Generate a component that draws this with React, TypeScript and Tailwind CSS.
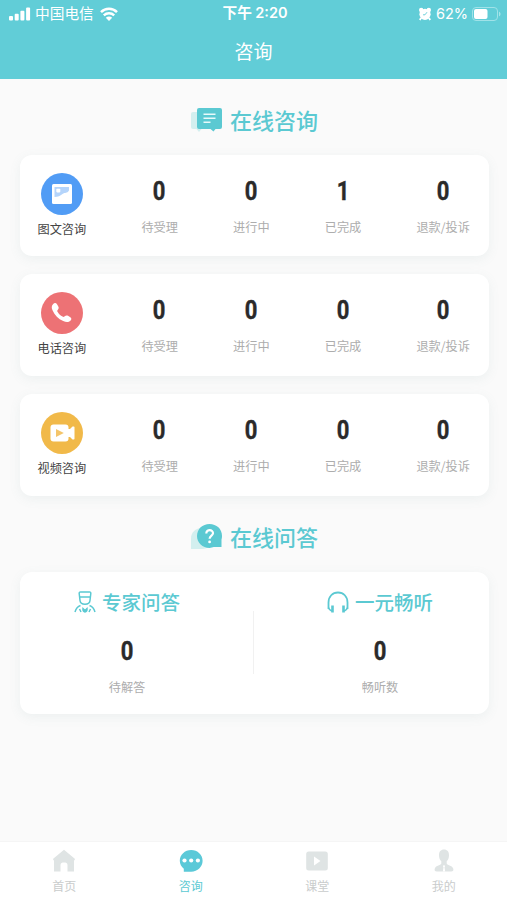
import type { ReactNode } from "react";

type Stat = {
  label: string;
  value: number;
};

type ConsultRow = {
  title: string;
  color: string;
  icon: ReactNode;
  stats: Stat[];
};

function PictureIcon() {
  return (
    <svg viewBox="0 0 42 42" className="h-full w-full">
      <rect x="11" y="11" width="20" height="20" rx="1.5" fill="#fff" />
      <path d="M13.500 14H28v3.500c-2 3.500-4 1.500-6.500 3.500-2.500 2-4.500 3-8 3z" fill="#b4d4fb" />
      <rect x="15.300" y="15.800" width="4" height="3.600" rx="0.800" fill="#fff" />
    </svg>
  );
}

function PhoneIcon() {
  return (
    <svg viewBox="0 0 42 42" className="h-full w-full">
      <path
        d="M12 12.200c1.300-1.500 3-1.600 4 0l1.300 2.400c.7 1.400.4 2.400-.6 3.300-.7.700-.6 1.300 0 2.200 1.200 2 2.800 3.500 4.800 4.500.9.500 1.500.4 2.200-.3 1-1 2.100-1.200 3.300-.5l2.300 1.400c1.400.9 1.400 2.300.1 3.500-1.700 1.700-4.200 1.700-7.200.4-4.900-2.100-8.500-5.800-10.700-10.800-1.100-2.600-1-4.600.5-6.100z"
        fill="#fff"
      />
    </svg>
  );
}

function VideoIcon() {
  return (
    <svg viewBox="0 0 42 42" className="h-full w-full">
      <rect x="9.500" y="12.500" width="18" height="17" rx="3" fill="#fff" />
      <path d="M27 17h2l2.500-2.500h1.300c.4 0 .7.300.7.700v11.600c0 .4-.3.700-.7.700h-1.300L29 25h-2z" fill="#fff" />
      <path d="M15 17v8l7.800-4z" fill="#f4c56a" />
    </svg>
  );
}

function makeStats(done: number): Stat[] {
  return [
    { label: "待受理", value: 0 },
    { label: "进行中", value: 0 },
    { label: "已完成", value: done },
    { label: "退款/投诉", value: 0 },
  ];
}

const rows: ConsultRow[] = [
  { title: "图文咨询", color: "bg-[#519cf5]", icon: <PictureIcon />, stats: makeStats(1) },
  { title: "电话咨询", color: "bg-[#ed7275]", icon: <PhoneIcon />, stats: makeStats(0) },
  { title: "视频咨询", color: "bg-[#f1b949]", icon: <VideoIcon />, stats: makeStats(0) },
];

function StatusBar() {
  return (
    <div className="grid h-7 grid-cols-3 items-center pl-[9px] pr-1.5 text-[14.700px] leading-none">
      <div className="flex items-center">
        <svg viewBox="0 0 22 14" className="h-3.5 w-[22px]" fill="#fff">
          <rect x="0" y="9" width="4" height="4.500" rx="1" />
          <rect x="5.700" y="6.700" width="4" height="6.800" rx="1" />
          <rect x="11.400" y="3.800" width="4" height="9.700" rx="1" />
          <rect x="17.100" y="0.500" width="4" height="13" rx="1" />
        </svg>
        <span className="-mt-0.5 ml-1">中国电信</span>
        <svg viewBox="0 0 18 14" className="ml-1.5 h-3.5 w-[18px]" fill="none" stroke="#fff">
          <path d="M1 5.200c4.500-4.500 11.500-4.500 16 0" strokeWidth="2.500" />
          <path d="M3.800 8.400c2.900-2.800 7.500-2.800 10.400 0" strokeWidth="2.400" />
          <path d="M5.800 10.700c1.800-1.600 4.600-1.600 6.400 0L9 13.900z" fill="#fff" stroke="none" />
        </svg>
      </div>
      <div className="-mt-0.5 text-center font-bold">
        下午 <span className="font-[Inter] text-[14.500px] font-semibold">2:20</span>
      </div>
      <div className="flex items-center justify-end">
        <svg viewBox="0 0 14 14" className="h-3.5 w-3.5">
          <circle cx="3.200" cy="3" r="2.200" fill="#fff" />
          <circle cx="10.800" cy="3" r="2.200" fill="#fff" />
          <path d="M3 11 1.800 13M11 11l1.200 2" stroke="#fff" strokeWidth="1.800" />
          <circle cx="7" cy="7.300" r="5.600" fill="#fff" />
          <path d="M9 5.200 7 7.800H5" fill="none" stroke="#61cdd7" strokeWidth="0.900" />
        </svg>
        <span className="ml-1 font-[Inter] text-[14.500px]">62%</span>
        <svg viewBox="0 0 29 14" className="ml-1 h-3.5 w-[29px]">
          <rect x="0.500" y="0.500" width="25" height="13" rx="3.500" fill="none" stroke="#a0e2e8" />
          <rect x="2" y="2" width="13.500" height="10" rx="2" fill="#fff" />
          <path d="M27 4.700c2 .7 2 3.900 0 4.600z" fill="#a5e5ea" />
        </svg>
      </div>
    </div>
  );
}

function SectionTitle({ icon, children }: { icon: ReactNode; children: ReactNode }) {
  return (
    <h2 className="flex h-8 items-center justify-center gap-2 text-[22px] font-medium leading-8 text-[#5bc9d2]">
      {icon}
      <span className="-mt-0.5">{children}</span>
    </h2>
  );
}

function Count({ value }: { value: number }) {
  return (
    <span className="inline-block scale-x-[0.88] font-[Roboto] text-[25px] font-bold leading-7 text-[#2a2a2a] [-webkit-text-stroke:0.400px_#2a2a2a]">
      {value}
    </span>
  );
}

function ConsultCard({ row }: { row: ConsultRow }) {
  return (
    <section className="flex h-[101.500px] justify-between rounded-xl bg-white pl-[17.500px] pr-[19px] shadow-[0_3px_12px_rgba(100,140,145,0.09)]">
      <div className="flex flex-col items-center pt-[18px]">
        <div className={`h-[42px] w-[42px] rounded-full ${row.color}`}>{row.icon}</div>
        <span className="mt-1 text-[12.200px] leading-5 text-[#444]">{row.title}</span>
      </div>
      {row.stats.map((stat) => (
        <div key={stat.label} className="flex flex-col items-center pt-[23px]">
          <Count value={stat.value} />
          <span className="mt-[11px] text-[12.200px] leading-5 text-[#adadad]">{stat.label}</span>
        </div>
      ))}
    </section>
  );
}

function AnswerColumn({ icon, title, label }: { icon: ReactNode; title: string; label: string }) {
  return (
    <div className="flex flex-col items-center pt-4">
      <h3 className="flex items-center gap-1.5 text-[19.500px] font-medium leading-7 text-[#5bc9d2]">
        {icon}
        {title}
      </h3>
      <div className="mt-[22px] flex">
        <Count value={0} />
      </div>
      <span className="mt-[11px] text-[12.200px] leading-5 text-[#adadad]">{label}</span>
    </div>
  );
}

const tabs = [
  {
    label: "首页",
    icon: <path d="M12 .8 1.200 9.800v1.400H2V22.500h6.500V16c0-2 1.500-2.500 3.500-2.500s3.500.5 3.500 2.500v6.500H22V11.200h.8V9.800z" />,
  },
  {
    label: "咨询",
    icon: (
      <>
        <path d="M12.200 1C5.800 1 .8 5.800.8 11.800c0 3.200 1.500 6 4 8v2.900h7.400c6.400 0 11.400-4.900 11.400-10.900S18.600 1 12.200 1z" />
        <g fill="#fff">
          <circle cx="5.500" cy="11.500" r="2.100" />
          <circle cx="12.200" cy="11.500" r="2.100" />
          <circle cx="18.900" cy="11.500" r="2.100" />
        </g>
      </>
    ),
  },
  {
    label: "课堂",
    icon: (
      <>
        <rect x="1.200" y="2.500" width="21.600" height="19" rx="2.500" />
        <path d="M9 7.500v9l6.500-4.500z" fill="#fff" />
      </>
    ),
  },
  {
    label: "我的",
    icon: (
      <>
        <path d="M12 .5C8.700.5 7 2.700 7 6.200c0 3 1 5 2.300 6.100v2.300c0 1.800-5.500 1.800-6.500 4.900-.6 2 .1 3 2 3h14.400c1.900 0 2.600-1 2-3-1-3.100-6.500-3.100-6.500-4.900v-2.300C16 11.200 17 9.200 17 6.200 17 2.700 15.300.5 12 .5z" />
        <path d="m12 15.800 1.100 1.500-.6 1 .7 4.200h-2.400l.7-4.200-.6-1z" fill="#fff" />
      </>
    ),
  },
];

export default function App() {
  return (
    <div className="flex h-[900px] w-full flex-col overflow-hidden bg-[#fafafa] font-['Noto_Sans_CJK_SC',sans-serif]">
      <header className="h-[79px] shrink-0 bg-[#61cdd7] text-white">
        <StatusBar />
        <h1 className="pt-[9px] text-center text-[19px] leading-7">咨询</h1>
      </header>

      <main className="flex-1 pl-5 pr-[18px] pt-[25px]">
        <SectionTitle
          icon={
            <svg viewBox="0 0 31 26" className="h-[26px] w-[31px]">
              <path d="M2 5h17v17H10.500L8 25l-2.500-3H2a2 2 0 0 1-2-2V7a2 2 0 0 1 2-2z" fill="#d3efef" />
              <path d="M8 1h21a2 2 0 0 1 2 2v17a2 2 0 0 1-2 2h-4.500L22.500 24.500l-3-2.500H8a2 2 0 0 1-2-2V3a2 2 0 0 1 2-2z" fill="#5bc9d2" />
              <path d="M12.500 7.300h12M12.500 11.300h12M12.500 15.300h7" stroke="#e9fafa" strokeWidth="1.600" />
            </svg>
          }
        >
          在线咨询
        </SectionTitle>
        <div className="mt-[18.500px] flex flex-col gap-[18.300px]">
          {rows.map((row) => (
            <ConsultCard key={row.title} row={row} />
          ))}
        </div>

        <div className="mt-[25px]">
          <SectionTitle
            icon={
              <svg viewBox="0 0 31 26" className="h-[26px] w-[31px]">
                <path d="M11 4C4.500 4 0 8.500 0 14.500V25h11c6 0 11-4.500 11-10.500S17 4 11 4z" fill="#d3efef" />
                <path d="M18.500 0C11.500 0 6 5 6 11.900s5.500 12 12.500 12c1.600 0 3-.3 4.300-.8H30.500v-7.500c.3-1 .5-2.200.5-3.700C31 5 25.500 0 18.500 0z" fill="#5bc9d2" />
                <path d="M15.300 9.500c0-4.700 6.900-4.200 6.700-.2-.1 2.400-3.400 2.400-3.400 5.500" fill="none" stroke="#fff" strokeWidth="2.200" />
                <circle cx="18.600" cy="17.900" r="1.400" fill="#fff" />
              </svg>
            }
          >
            在线问答
          </SectionTitle>
        </div>
        <section className="mt-[19px] flex h-[142px] items-start justify-between rounded-xl bg-white pl-[54px] pr-14 shadow-[0_3px_12px_rgba(100,140,145,0.09)]">
          <AnswerColumn
            title="专家问答"
            label="待解答"
            icon={
              <svg viewBox="0 0 22 22" className="h-[22px] w-[22px]" fill="none" stroke="#5bc9d2" strokeWidth="1.500">
                <path d="M6.500 1h9q1.500 0 1.300 1.500L16 9.500c-.4 5-9.600 5-10 0L5.200 2.500Q5 1 6.500 1zM5.800 6h10.400" />
                <path d="M6.500 14.500C3.500 15.500 2 17.500 1 21M15.500 14.500c3 1 4.500 3 5.500 6.500M5.500 18l1.500 3M16.500 18 15 21" />
                <path d="M9 17.500c-.6 4.500 4.600 4.500 4 0L11 19.500z" fill="#5bc9d2" />
              </svg>
            }
          />
          <div className="mt-[39px] h-[63px] w-px bg-[#f1f1f1]" />
          <AnswerColumn
            title="一元畅听"
            label="畅听数"
            icon={
              <svg viewBox="0 0 22 22" className="h-[22px] w-[22px]" fill="none" stroke="#5bc9d2">
                <path d="M1.500 18v-6.500C1.500 5.500 5.500 1.500 11 1.500s9.500 4 9.500 10V18" strokeWidth="1.800" />
                <path d="M5.500 14.500v7M16.500 14.500v7" strokeWidth="2.600" />
                <path d="M1.500 16.500c.5 2 2 3 4 3.500M20.500 16.500c-.5 2-2 3-4 3.500" strokeWidth="1.300" />
              </svg>
            }
          />
        </section>
      </main>

      <nav className="grid h-[59px] shrink-0 grid-cols-4 border-t border-[#f5f5f5] bg-white pl-px">
        {tabs.map((tab) => (
          <button
            key={tab.label}
            type="button"
            className={`flex flex-col items-center pt-[7px] ${
              tab.label === "咨询" ? "text-[#5bc9d8]" : "text-[#dfe4e4]"
            }`}
          >
            <svg viewBox="0 0 24 24" className="h-6 w-6" fill="currentColor">
              {tab.icon}
            </svg>
            <span
              className={`mt-[3px] text-xs leading-5 ${
                tab.label === "咨询" ? "text-[#5bc9d2]" : "text-[#c9cccc]"
              }`}
            >
              {tab.label}
            </span>
          </button>
        ))}
      </nav>
    </div>
  );
}
